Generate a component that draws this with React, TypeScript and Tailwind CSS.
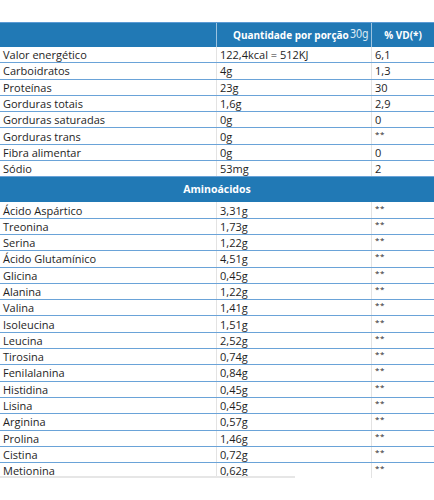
const nutrients: [string, string, string][] = [
  ["Valor energético", "122,4kcal = 512KJ", "6,1"],
  ["Carboidratos", "4g", "1,3"],
  ["Proteínas", "23g", "30"],
  ["Gorduras totais", "1,6g", "2,9"],
  ["Gorduras saturadas", "0g", "0"],
  ["Gorduras trans", "0g", "**"],
  ["Fibra alimentar", "0g", "0"],
  ["Sódio", "53mg", "2"],
];

const aminos: [string, string][] = [
  ["Ácido Aspártico", "3,31g"],
  ["Treonina", "1,73g"],
  ["Serina", "1,22g"],
  ["Ácido Glutamínico", "4,51g"],
  ["Glicina", "0,45g"],
  ["Alanina", "1,22g"],
  ["Valina", "1,41g"],
  ["Isoleucina", "1,51g"],
  ["Leucina", "2,52g"],
  ["Tirosina", "0,74g"],
  ["Fenilalanina", "0,84g"],
  ["Histidina", "0,45g"],
  ["Lisina", "0,45g"],
  ["Arginina", "0,57g"],
  ["Prolina", "1,46g"],
  ["Cistina", "0,72g"],
  ["Metionina", "0,62g"],
];

function Row({ name, qty, vd }: { name: string; qty: string; vd: string }) {
  return (
    <div className="grid h-[16.3px] grid-cols-[217px_155px_1fr] border-b-[1.5px] border-[#6aa3d8] text-[11px] leading-none text-[#1e1e1e]">
      <div className="flex items-center border-r border-[#e3e3e3] pl-[3px]">{name}</div>
      <div className="flex items-center border-r border-[#e3e3e3] pl-[3px]">{qty}</div>
      <div className="flex items-center pl-[3px]">
        {vd === "**" ? <span className="-mt-[5px] text-[8px] tracking-[0.5px]">**</span> : vd}
      </div>
    </div>
  );
}

export default function App() {
  return (
    <div className="bg-white pt-[22px]" style={{ fontFamily: "'Open Sans', Lato, sans-serif" }}>
      <div className="relative h-[456px] overflow-hidden">
        {/* HEADER */}
        <div className="grid h-[25px] grid-cols-[217px_155px_1fr] border-t border-[#5b9bd5] bg-[#2179b5] text-[10px] text-white">
          <div className="border-r border-[#9cc3e0]" />
          <div className="flex items-center justify-end gap-[1px] border-r border-[#9cc3e0] pr-[3px]">
            <span className="font-bold">Quantidade por porção</span>
            <span className="text-[11.5px] font-light tracking-[-0.5px] text-[#d8e8f4]" style={{ fontFamily: "'Liberation Sans Narrow', 'DejaVu Sans Condensed', sans-serif" }}>30g</span>
          </div>
          <div className="flex items-center justify-center font-bold">% VD(*)</div>
        </div>

        {nutrients.map(([n, q, v]) => (
          <Row key={n} name={n} qty={q} vd={v} />
        ))}

        {/* AMINOÁCIDOS */}
        <div className="flex h-[25px] items-center justify-center bg-[#2179b5] text-[10.5px] font-bold text-white">
          Aminoácidos
        </div>

        {aminos.map(([n, q]) => (
          <Row key={n} name={n} qty={q} vd="**" />
        ))}

        {/* scrollbar */}
        <div className="absolute bottom-0 left-0 h-[2px] w-[295px] bg-[#e6e6e6]" />
      </div>
    </div>
  );
}
